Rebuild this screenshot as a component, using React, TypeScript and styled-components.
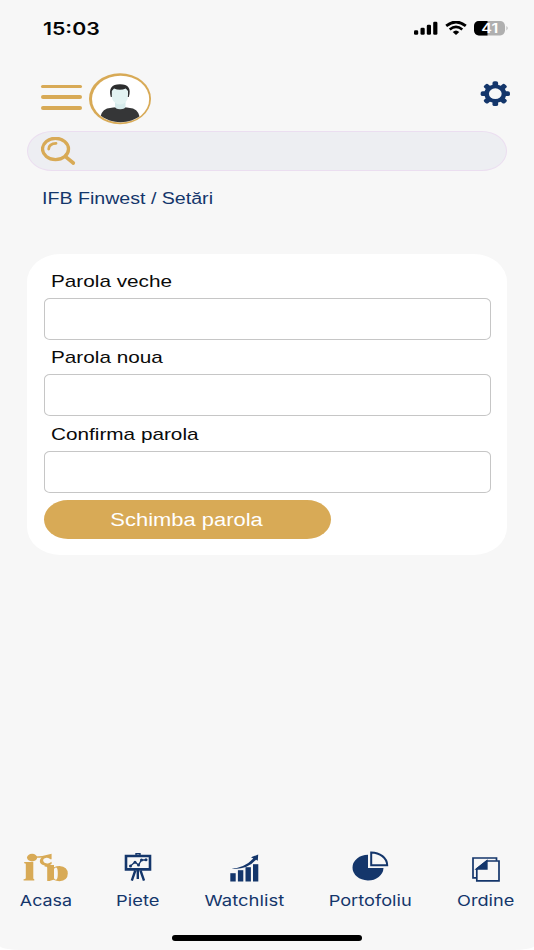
import React from "react";
import styled, { createGlobalStyle } from "styled-components";

const navy = "#14366b";
const gold = "#d8aa56";

const Global = createGlobalStyle`
  * { box-sizing: border-box; }
  body { margin: 0; background: #fff; font-family: "Liberation Sans", Arial, sans-serif; }
  svg { display: block; flex: none; }
`;

const Screen = styled.div`
  width: 534px;
  height: 950px;
  background: #f7f7f7;
  border-radius: 0 0 22px 22px / 0 0 4px 4px;
  display: flex;
  flex-direction: column;
  overflow: hidden;
`;

const StatusBar = styled.header`
  height: 56px;
  padding: 0 25px 0 43px;
  display: flex;
  align-items: center;
  justify-content: space-between;
`;

const Wide = styled.span<{ $size: number; $x: number; $origin?: string }>`
  display: inline-block;
  white-space: nowrap;
  font-size: ${(p) => p.$size}px;
  transform: scaleX(${(p) => p.$x});
  transform-origin: ${(p) => p.$origin ?? "left"} center;
`;

const Clock = styled(Wide)`
  font-family: Inter, sans-serif;
  font-weight: 600;
  color: #050505;
`;

const StatusIcons = styled.div`
  display: flex;
  align-items: center;
  gap: 7px;
`;

const Header = styled.div`
  height: 75px;
  padding: 17px 24px 0 41px;
  display: flex;
  align-items: flex-start;
`;

const Menu = styled.button`
  width: 42px;
  height: 27px;
  margin: 11.5px 6px 0 0;
  padding: 0;
  border: 0;
  background: none;
  display: flex;
  flex-direction: column;
  gap: 7.3px;
`;

const MenuLine = styled.i`
  width: 41px;
  height: 3.5px;
  flex: none;
  border-radius: 2px;
  background: ${gold};
`;

const Gear = styled.div`
  margin: 8px 0 0 auto;
`;

const Search = styled.div`
  height: 40px;
  margin: 0 27px;
  padding: 5px 0 0 13px;
  border: 1px solid #ebdef0;
  border-radius: 25px / 20px;
  background: #edeef2;
`;

const Crumb = styled.div`
  height: 83px;
  padding: 18px 0 0 42px;
  line-height: 20px;
  color: ${navy};
`;

const Card = styled.form`
  height: 301px;
  margin: 0 27px;
  padding: 15px 16px 0 17px;
  border-radius: 33px / 28px;
  background: #fff;
`;

const Field = styled.label`
  display: block;
  height: 76.4px;
  color: #0a0a0a;
`;

const Label = styled.div`
  height: 29px;
  padding-left: 7px;
  line-height: 26px;
`;

const Input = styled.input`
  display: block;
  width: 447px;
  height: 42px;
  padding: 0 10px;
  border: 1px solid #c6c6c6;
  border-radius: 6px / 5px;
  background: #fff;
  outline: 0;
  font-size: 17px;
`;

const Submit = styled.button`
  display: block;
  width: 287px;
  height: 39px;
  margin-top: 1.8px;
  padding: 1px 2px 0 0;
  border: 0;
  border-radius: 24px / 19.5px;
  background: ${gold};
  color: #fff;
  font-family: inherit;
  line-height: 39px;
`;

const Nav = styled.nav`
  margin-top: auto;
  height: 84px;
  padding: 0 16px 0 16px;
  display: grid;
  grid-template-columns: 59px 126px 87px 165px 66px;
`;

const Tab = styled.a`
  display: flex;
  flex-direction: column;
  align-items: center;
  color: ${navy};
  line-height: 20px;
`;

const TabIcon = styled.div`
  height: 40px;
  display: flex;
  align-items: flex-start;
`;

const HomeBar = styled.div`
  width: 190px;
  height: 6px;
  margin: 0 auto 9px;
  flex: none;
  border-radius: 3px;
  background: #000;
`;

const Signal = () => (
  <svg width="24" height="14" viewBox="0 0 24 14">
    <rect x="0" y="9.2" width="4.2" height="4.5" rx="1.3" />
    <rect x="6.5" y="6.8" width="4.2" height="6.9" rx="1.3" />
    <rect x="12.8" y="3.8" width="4.2" height="9.9" rx="1.3" />
    <rect x="19.2" y=".8" width="4.2" height="12.9" rx="1.3" />
  </svg>
);

const Wifi = () => (
  <svg width="22" height="14" viewBox="0 0 22 14">
    <path d="M1.2 4.9Q11-2.9 20.8 4.9" fill="none" stroke="#000" strokeWidth="2.8" />
    <path d="M4.7 8.4Q11 3.2 17.3 8.4" fill="none" stroke="#000" strokeWidth="2.6" />
    <path d="M7.7 11Q11 8 14.3 11L11 13.9Z" />
  </svg>
);

const Battery = () => (
  <svg width="35" height="15" viewBox="0 0 35 15">
    <defs>
      <clipPath id="cell"><rect width="31" height="14.4" rx="4.8" /></clipPath>
    </defs>
    <g clipPath="url(#cell)">
      <rect width="31" height="15" fill="#afafaf" />
      <rect width="13.5" height="15" />
    </g>
    <path d="M32.5 5q2.2 2.2 0 4.5z" fill="#afafaf" />
    <text x="15.7" y="11.8" textAnchor="middle" fontFamily="Inter, sans-serif" fontWeight="600" fontSize="12.5" fill="#fff" textLength="17" lengthAdjust="spacingAndGlyphs">41</text>
  </svg>
);

const Avatar = () => (
  <svg width="62" height="52" viewBox="0 0 62 52">
    <defs>
      <clipPath id="face"><ellipse cx="31.6" cy="26.3" rx="28.5" ry="23" /></clipPath>
    </defs>
    <ellipse cx="31" cy="25.7" rx="31" ry="25.5" fill={gold} />
    <ellipse cx="31.6" cy="26.1" rx="28.6" ry="23.4" fill="#fff" />
    <g clipPath="url(#face)">
      <path d="M10.5 50Q11 37.5 18 35.5Q24 34 31 34Q38 34 44 35.5Q51 37.5 51.5 50Z" fill="#353637" />
      <path d="M26 27H36.5V33Q36.5 36.3 31.2 36.3Q26 36.3 26 33Z" fill="#d6ebeb" />
      <path d="M21.8 24C19.5 15.5 22.5 11.3 31 11.3S42.3 15.5 39.8 24Z" fill="#2c2d2e" />
      <path d="M22.8 18L25 15.6Q31 18 36.8 15.6L39 18V22Q39.4 26 36.8 28.9Q34 31.4 31 31.4Q28 31.4 25.2 28.9Q22.4 26 22.8 22Z" fill="#e3f3f2" />
    </g>
  </svg>
);

const GearIcon = () => (
  <svg width="30" height="26" viewBox="0 0 30 26">
    <g transform="translate(15.3 12.7) scale(1.18 1)" fill={navy}>
      {[0, 45, 90, 135].map((a) => (
        <rect key={a} x="-2.4" y="-12.4" width="4.8" height="24.8" rx="1.7" transform={`rotate(${a})`} />
      ))}
      <circle r="9.3" />
      <circle r="5.4" fill="#f7f7f7" />
    </g>
  </svg>
);

const SearchIcon = () => (
  <svg width="36" height="30" viewBox="0 0 36 30" fill="none" stroke={gold} strokeLinecap="round">
    <ellipse cx="14.5" cy="12" rx="13" ry="10.7" strokeWidth="3.3" />
    <path d="M24.5 19.7L32.3 26" strokeWidth="3.6" />
    <path d="M7.7 12Q8 6.7 15 6.4" strokeWidth="2.8" />
  </svg>
);

const LogoIcon = () => (
  <svg width="46" height="30" viewBox="0 0 46 30" fill={gold}>
    <ellipse cx="9.1" cy="4.6" rx="5.1" ry="3.8" />
    <path d="M1.2 9H10.3V25.3Q10.3 26.3 11.3 26.3V27.6H.6V26.3Q2.8 26.3 2.8 25V11Q2.8 10.2 1.2 10.2Z" />
    <path d="M12.5 3.6Q20 3.4 28.6.8V6.3H27.4Q26 4.6 23.5 4.8Q19.8 5.4 20.2 8Q21 10.8 25 10.4Q27 10.1 28.6 8.7V11Q26 13.2 22.3 12.6Q16.8 11.6 16.8 8Q17 5.8 18.6 4.6Q15 5 12.5 4.6Z" />
    <path fillRule="evenodd" d="M21.6 11.9H31V14.3Q33.5 13 36.5 13Q44.8 13.8 44.8 20.6Q44.8 27.6 36.5 28.2Q33.5 28.2 30.5 26.8L26.5 28H24.2V14.4Q24.2 13.4 21.6 13.4ZM31 15.9V25.2Q31.8 26.8 33.2 26.8Q34.8 26.3 34.8 20.6Q34.8 14.8 33.2 14.6Q31.8 14.6 31 15.9Z" />
  </svg>
);

const BoardIcon = () => (
  <svg width="28" height="29" viewBox="0 0 28 29" fill="none" stroke={navy}>
    <path d="M2 3H26V16.4H2Z" strokeWidth="2.6" />
    <path d="M12 2V.8H16V2" strokeWidth="1.4" />
    <path d="M13.8 17V26M11.3 17.5L7.8 27.7M16.5 17.5L20 27.7" strokeWidth="2.4" />
    <path d="M6.5 13L11 9L14.5 12L17.5 7H22" strokeWidth="1.3" />
    <g fill={navy} stroke="none">
      <circle cx="6.5" cy="13" r="1.5" /><circle cx="11" cy="9.3" r="1.5" />
      <circle cx="14.5" cy="12" r="1.5" /><circle cx="17.5" cy="7" r="1.5" /><circle cx="22" cy="6.7" r="1.5" />
    </g>
  </svg>
);

const ChartIcon = () => (
  <svg width="29" height="29" viewBox="0 0 29 29" fill={navy}>
    <rect x=".3" y="19.2" width="5.4" height="8.3" />
    <rect x="7.9" y="16.2" width="5.4" height="11.3" />
    <rect x="15.5" y="13.2" width="5.4" height="14.3" />
    <rect x="23" y="10.2" width="5.3" height="17.3" />
    <path d="M1.5 14.8Q15 13.5 23.3 4.5L21 3.3L28.2.5L27.8 6.8L26 5.8Q17 16 1.5 14.8Z" />
  </svg>
);

const PieIcon = () => (
  <svg width="37" height="30" viewBox="0 0 37 30">
    <path d="M16 3.8V17H31.5A15.5 12.8 0 1 1 16 3.8Z" fill={navy} />
    <path d="M19.2 1.4A16 13 0 0 1 35.2 14.2H19.2Z" fill="none" stroke={navy} strokeWidth="2" />
  </svg>
);

const OrdersIcon = () => (
  <svg width="28" height="25" viewBox="0 0 28 25" fill="none" stroke={navy} strokeWidth="1.7">
    <path d="M4.5 20.8H1V1H24.5V3.8" />
    <path d="M4.8 12L14.8 4H27V23.8H4.8Z" />
    <path d="M4.8 12L14.8 4V12Z" fill={navy} />
  </svg>
);

const fields = [
  { id: "old", label: "Parola veche" },
  { id: "new", label: "Parola noua" },
  { id: "confirm", label: "Confirma parola" },
];

const tabs = [
  { label: "Acasa", icon: <LogoIcon />, top: 1.5, x: 1.19 },
  { label: "Piete", icon: <BoardIcon />, top: 2, x: 1.22 },
  { label: "Watchlist", icon: <ChartIcon />, top: 2.5, x: 1.23 },
  { label: "Portofoliu", icon: <PieIcon />, top: 0, x: 1.215 },
  { label: "Ordine", icon: <OrdersIcon />, top: 5.5, x: 1.21 },
];

const IconOffset = styled.div<{ $top: number }>`
  padding-top: ${(p) => p.$top}px;
`;

const TabLabel = styled(Wide)`
  font-family: Inter, sans-serif;
`;

export default function App() {
  return (
    <>
      <Global />
      <Screen>
        <StatusBar>
          <Clock $size={17.3} $x={1.23}>15:03</Clock>
          <StatusIcons><Signal /><Wifi /><Battery /></StatusIcons>
        </StatusBar>
        <Header>
          <Menu type="button" aria-label="Meniu"><MenuLine /><MenuLine /><MenuLine /></Menu>
          <Avatar />
          <Gear><GearIcon /></Gear>
        </Header>
        <Search><SearchIcon /></Search>
        <Crumb><Wide $size={16} $x={1.225}>IFB Finwest / Setări</Wide></Crumb>
        <Card>
          {fields.map((f) => (
            <Field key={f.id}>
              <Label><Wide $size={17} $x={1.22}>{f.label}</Wide></Label>
              <Input type="password" />
            </Field>
          ))}
          <Submit type="button"><Wide $size={18} $x={1.218} $origin="center">Schimba parola</Wide></Submit>
        </Card>
        <Nav>
          {tabs.map((t) => (
            <Tab key={t.label}>
              <TabIcon><IconOffset $top={t.top}>{t.icon}</IconOffset></TabIcon>
              <TabLabel $size={15} $x={t.x} $origin="center">{t.label}</TabLabel>
            </Tab>
          ))}
        </Nav>
        <HomeBar />
      </Screen>
    </>
  );
}
